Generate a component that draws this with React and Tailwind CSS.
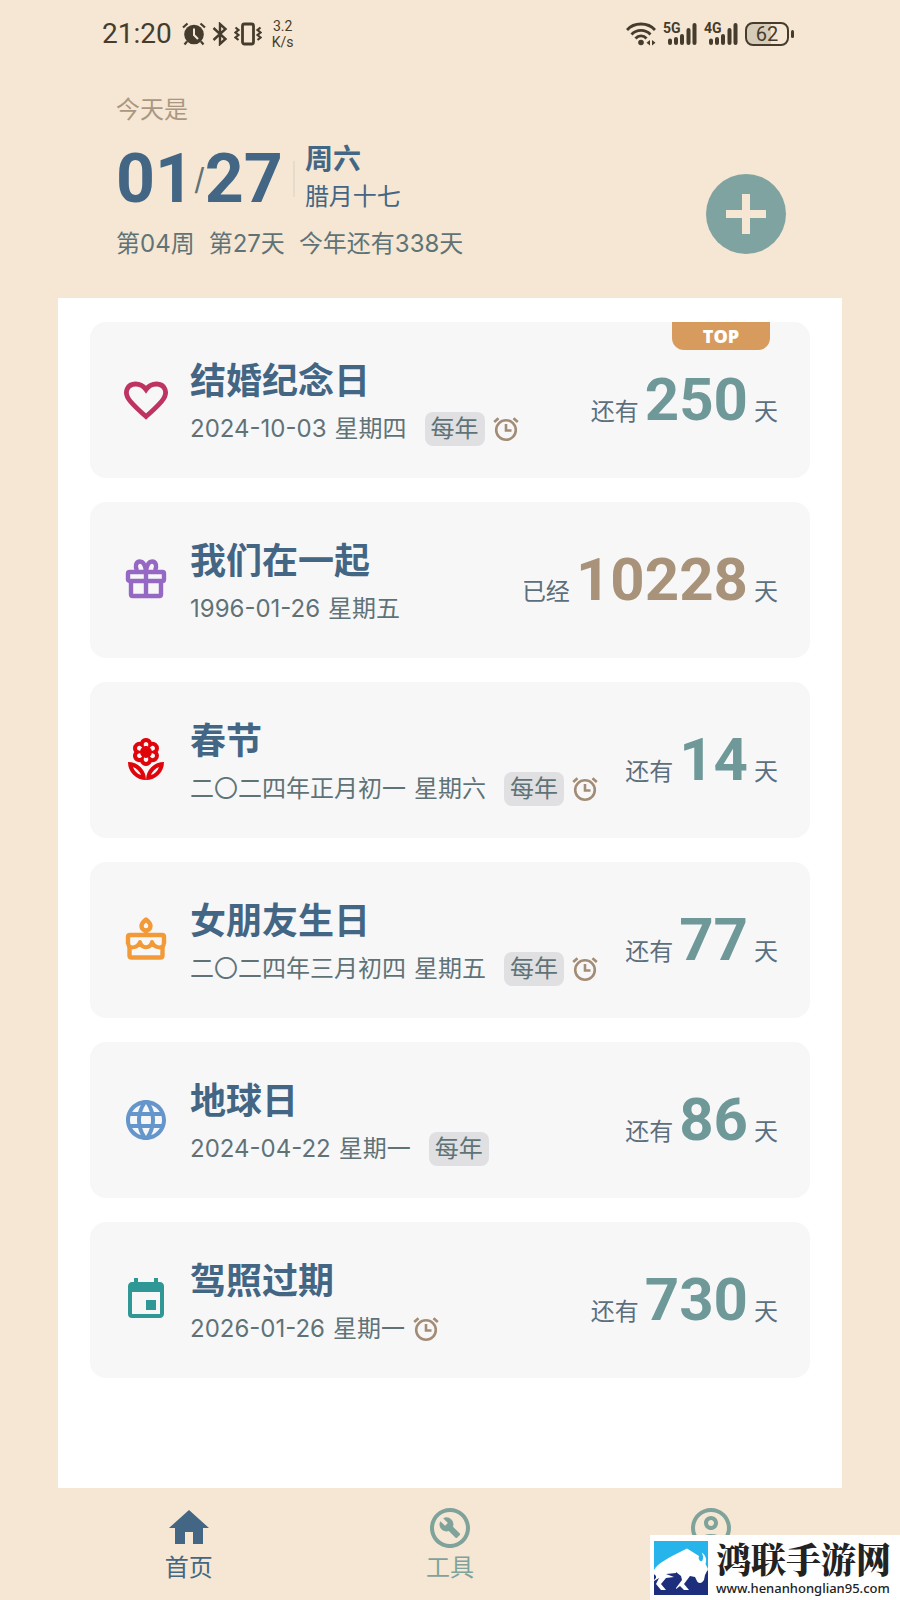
import { MdEvent, MdHome, MdLanguage, MdOutlineAccountCircle, MdOutlineBuildCircle, MdOutlineLocalFlorist } from "react-icons/md";

const HeartIcon = () => (
  <svg viewBox="0 0 48 48" className="size-12 shrink-0 text-[#bd3461]" fill="none" stroke="currentColor" strokeWidth="4.800">
    <path d="M24 40.500 C17 34.500 12 29.500 8.5 25.500 C0 15.500 6.500 8 13.500 8 C18 8 21.500 10 24 13.500 C26.500 10 30 8 34.500 8 C41.500 8 48 15.500 39.500 25.500 C36 29.500 31 34.500 24 40.500 Z" />
  </svg>
);

const GiftIcon = () => (
  <svg viewBox="0 0 48 48" className="size-12 shrink-0 text-[#9568c4]" fill="none" stroke="currentColor" strokeWidth="4.400" strokeLinejoin="round">
    <rect x="6" y="16" width="36" height="9" rx="1.500" />
    <path d="M9 25 V38.500 Q9 40 10.500 40 H37.500 Q39 40 39 38.500 V25 M24 15 V40" />
    <path d="M24 15 C23 8 21 5.500 18 5.500 C13.500 5.500 13 11 15 14.500 M24 15 C25 8 27 5.500 30 5.500 C34.500 5.500 35 11 33 14.500" />
  </svg>
);

const CakeIcon = () => (
  <svg viewBox="0 0 48 48" className="size-12 shrink-0 text-[#f39a38]" fill="none" stroke="currentColor" strokeWidth="4.400" strokeLinejoin="round">
    <path d="M24 3.500 C21.500 5.500 19.500 7.500 19.500 10 A4.500 4.500 0 0 0 28.500 10 C28.500 7.500 26.500 5.500 24 3.500 Z M24 14 V18" />
    <path d="M6 28 V21 Q6 19 8 19 H40 Q42 19 42 21 V28" />
    <path d="M6 27 C6 33 15 33 18 26 C20 33 28 33 30 26 C33 33 42 33 42 27" strokeWidth="4" />
    <path d="M7.500 30 V39.500 Q7.500 41.500 9.500 41.500 H38.500 Q40.500 41.500 40.500 39.500 V30" />
  </svg>
);

const ClockIcon = () => (
  <svg viewBox="0 0 26 26" className="size-[26px] shrink-0 text-[#a38c76]" fill="none" stroke="currentColor" strokeWidth="2.600">
    <circle cx="13" cy="14" r="9.800" />
    <path d="M13 8 V14.500 H18.500 M1.200 6 L5.500 2.200 M24.800 6 L20.500 2.200" />
  </svg>
);

const AlarmStatusIcon = () => (
  <svg viewBox="0 0 24 24" className="h-6 w-6" fill="none" stroke="currentColor">
    <circle cx="12" cy="12.500" r="9.800" fill="currentColor" stroke="none" />
    <path d="M1 5.500 L5.500 1.500 M23 5.500 L18.500 1.500 M5 19.500 L2.500 22.500 M19 19.500 L21.500 22.500" strokeWidth="2.200" />
    <path d="M12 6.500 V13 L16 17" stroke="#f5e7d3" strokeWidth="2" />
  </svg>
);

const BluetoothIcon = () => (
  <svg viewBox="0 0 16 24" className="h-6 w-4" fill="none" stroke="currentColor" strokeWidth="2.400">
    <path d="M1.500 6 L13.500 17 L8 22 V2 L13.500 7 L1.500 18" />
  </svg>
);

const VibrateIcon = () => (
  <svg viewBox="0 0 28 24" className="h-6 w-7" fill="none" stroke="currentColor" strokeWidth="2.800">
    <rect x="8.500" y="2" width="11" height="20" rx="2" />
    <path d="M1.500 5.500 L4.500 8 L1.500 10.500 L4.500 13 L1.500 15.500 L4.500 18 M26.500 5.500 L23.500 8 L26.500 10.500 L23.500 13 L26.500 15.500 L23.500 18" strokeWidth="2.200" />
  </svg>
);

const WifiIcon = () => (
  <svg viewBox="0 0 30 24" className="h-6 w-[30px]" fill="none" stroke="currentColor" strokeWidth="2.800">
    <path d="M1 8 C8 0 22 0 29 8 M5.500 12.500 C10.500 7 19.500 7 24.500 12.500 M9.500 16.500 C12.500 13 17.500 13 20.500 16.500" />
    <circle cx="15" cy="20.500" r="2.800" fill="currentColor" stroke="none" />
    <path d="M24 18 V23.500 L20.500 20.700 Z M26 18 V23.500 L29.500 20.700 Z" fill="currentColor" stroke="none" />
  </svg>
);

const Signal = ({ label }) => (
  <div className="relative h-6 w-[34px]">
    <span className="absolute -top-px left-0 font-[Roboto] text-sm leading-[14px] font-bold">{label}</span>
    <svg viewBox="0 0 34 24" className="size-full" fill="none" stroke="currentColor" strokeWidth="4" strokeLinecap="round">
      <path d="M7 18.500 V21 M13 17 V21 M19 14 V21 M25.500 8 V21 M31.500 3 V21" />
    </svg>
  </div>
);

const BisonLogo = () => (
  <svg viewBox="0 0 54 54" className="size-[54px] shrink-0">
    <rect width="54" height="54" fill="#27b4ea" />
    <path d="M0 30 H54 V54 H0 Z" fill="#1d2f7c" />
    <path d="M0 29 C4 22 13 18 20 14 L33 7.500 L45 15 C44 18 46 21 48 20 C50 17 49 14 47.500 11.500 C52 14 53 19 51.500 23 L54 28 L51 34 L50 39 C48 42 46 43 43.500 41 L41 36 L36 35 L30 43 L35 49 H30 L26 45 L22 48 V32 L12 33 L20 36 L12 37 L7 43 L12 49 H7 L2 43 L5 37 L0 40 Z" fill="#fff" />
    <path d="M0 33 L2 35 V37 L0 39 Z M22 31 V47 L28 39 L27 35 Z" fill="#1d2f7c" />
  </svg>
);

const events = [
  { title: "结婚纪念日", date: "2024-10-03", weekday: "星期四", repeat: true, alarm: true, top: true, label: "还有", days: 250, icon: <HeartIcon /> },
  { title: "我们在一起", date: "1996-01-26", weekday: "星期五", label: "已经", days: 10228, past: true, icon: <GiftIcon /> },
  { title: "春节", date: "二〇二四年正月初一", weekday: "星期六", repeat: true, alarm: true, label: "还有", days: 14, icon: <MdOutlineLocalFlorist className="size-12 shrink-0 text-[#e0040b]" /> },
  { title: "女朋友生日", date: "二〇二四年三月初四", weekday: "星期五", repeat: true, alarm: true, label: "还有", days: 77, icon: <CakeIcon /> },
  { title: "地球日", date: "2024-04-22", weekday: "星期一", repeat: true, label: "还有", days: 86, icon: <MdLanguage className="size-12 shrink-0 text-[#6496cb]" /> },
  { title: "驾照过期", date: "2026-01-26", weekday: "星期一", alarm: true, label: "还有", days: 730, icon: <MdEvent className="size-12 shrink-0 text-[#2f9896]" /> },
];

const EventCard = ({ title, date, weekday, repeat, alarm, top, label, days, past, icon }) => (
  <li className="relative flex h-[156px] items-center gap-5 rounded-2xl bg-[#f8f7f8] px-8">
    {top && (
      <span className="absolute top-0 right-10 w-[98px] rounded-b-xl bg-[#d79b5d] text-center font-['Open_Sans'] text-lg leading-7 font-extrabold text-white">
        TOP
      </span>
    )}
    {icon}
    <div className="min-w-0 flex-1 whitespace-nowrap">
      <h2 className="text-4xl leading-14 font-bold text-[#436684]">{title}</h2>
      <div className="mt-0.5 flex h-9 items-center gap-2 text-2xl text-[#5f7377]">
        <span>{date}</span>
        <span>{weekday}</span>
        {repeat && <span className="ml-2.5 rounded-lg bg-[#e0e0e2] px-1.5 leading-[34px]">每年</span>}
        {alarm && <ClockIcon />}
      </div>
    </div>
    <div className="flex items-baseline gap-1.5 whitespace-nowrap text-2xl text-[#5b6f7c]">
      <span>{label}</span>
      <span className={`font-[Roboto] text-6xl leading-[72px] font-bold ${past ? "text-[#a8937a]" : "text-[#6f9998]"}`}>{days}</span>
      <span>天</span>
    </div>
  </li>
);

export default function App() {
  return (
    <div className="relative flex min-h-screen flex-col bg-[#f5e7d3] px-[58px] font-[Inter,'Noto_Sans_CJK_SC',sans-serif]">
      <div className="flex h-[68px] items-center justify-between pr-12 pl-11 text-[#453c2d]">
        <div className="flex items-center gap-1.5">
          <span className="mr-1 font-[Roboto] text-[28px] leading-8">21:20</span>
          <AlarmStatusIcon />
          <BluetoothIcon />
          <VibrateIcon />
          <div className="ml-1 text-center font-[Roboto] text-sm leading-4">
            <p>3.2</p>
            <p>K/s</p>
          </div>
        </div>
        <div className="flex items-center gap-[7px]">
          <WifiIcon />
          <Signal label="5G" />
          <Signal label="4G" />
          <div className="flex items-center gap-0.5">
            <span className="h-6 w-11 rounded-lg border-2 border-current bg-linear-to-r from-[#d6cbb9] from-60% to-transparent to-60% text-center font-[Roboto] text-xl leading-5">
              62
            </span>
            <span className="h-2 w-[3px] rounded-full bg-current" />
          </div>
        </div>
      </div>

      <header className="flex items-end justify-between pt-6 pr-14 pb-9 pl-[58px]">
        <div>
          <p className="text-2xl leading-9 text-[#ab9781]">今天是</p>
          <div className="flex h-[98px] items-center pt-1 text-[#436684]">
            <span className="font-[Roboto] text-[68px] leading-none font-bold">01</span>
            <span className="text-3xl text-[#5f7377]">/</span>
            <span className="font-[Roboto] text-[68px] leading-none font-bold">27</span>
            <span className="mx-2.5 h-9 w-0.5 bg-[#e6dccc]" />
            <div>
              <p className="text-[28px] leading-9 font-bold">周六</p>
              <p className="text-2xl leading-10">腊月十七</p>
            </div>
          </div>
          <p className="flex gap-3.5 text-2xl leading-9 text-[#5f7377]">
            <span>第04周</span>
            <span>第27天</span>
            <span>今年还有338天</span>
          </p>
        </div>
        <button type="button" aria-label="添加" className="mb-2 flex size-20 items-center justify-center rounded-full bg-[#7fa3a1]">
          <svg viewBox="0 0 40 40" className="size-10" stroke="#f5e7d3" strokeWidth="8">
            <path d="M20 0 V40 M0 20 H40" />
          </svg>
        </button>
      </header>

      <main className="flex-1 bg-white px-8 py-6">
        <ul className="flex flex-col gap-6">
          {events.map((event) => (
            <EventCard key={event.title} {...event} />
          ))}
        </ul>
      </main>

      <nav className="grid h-28 grid-cols-3 pt-4 text-2xl leading-8 text-[#7fa39b]">
        <a href="#home" className="flex flex-col items-center text-[#436684]">
          <MdHome className="size-12" />
          首页
        </a>
        <a href="#tools" className="flex flex-col items-center">
          <MdOutlineBuildCircle className="size-12" />
          工具
        </a>
        <a href="#me" aria-label="我的" className="flex flex-col items-center">
          <MdOutlineAccountCircle className="size-12" />
        </a>
      </nav>

      <div className="absolute right-0 bottom-0 flex h-[65px] w-[250px] items-center gap-2 bg-white pl-1 whitespace-nowrap text-[#222]">
        <BisonLogo />
        <div>
          <p className="font-['Noto_Serif_CJK_SC','Noto_Sans_CJK_SC',serif] text-[35px] leading-10 font-black">鸿联手游网</p>
          <p className="font-['Noto_Sans'] text-[13px] leading-5 font-medium">www.henanhonglian95.com</p>
        </div>
      </div>
    </div>
  );
}
